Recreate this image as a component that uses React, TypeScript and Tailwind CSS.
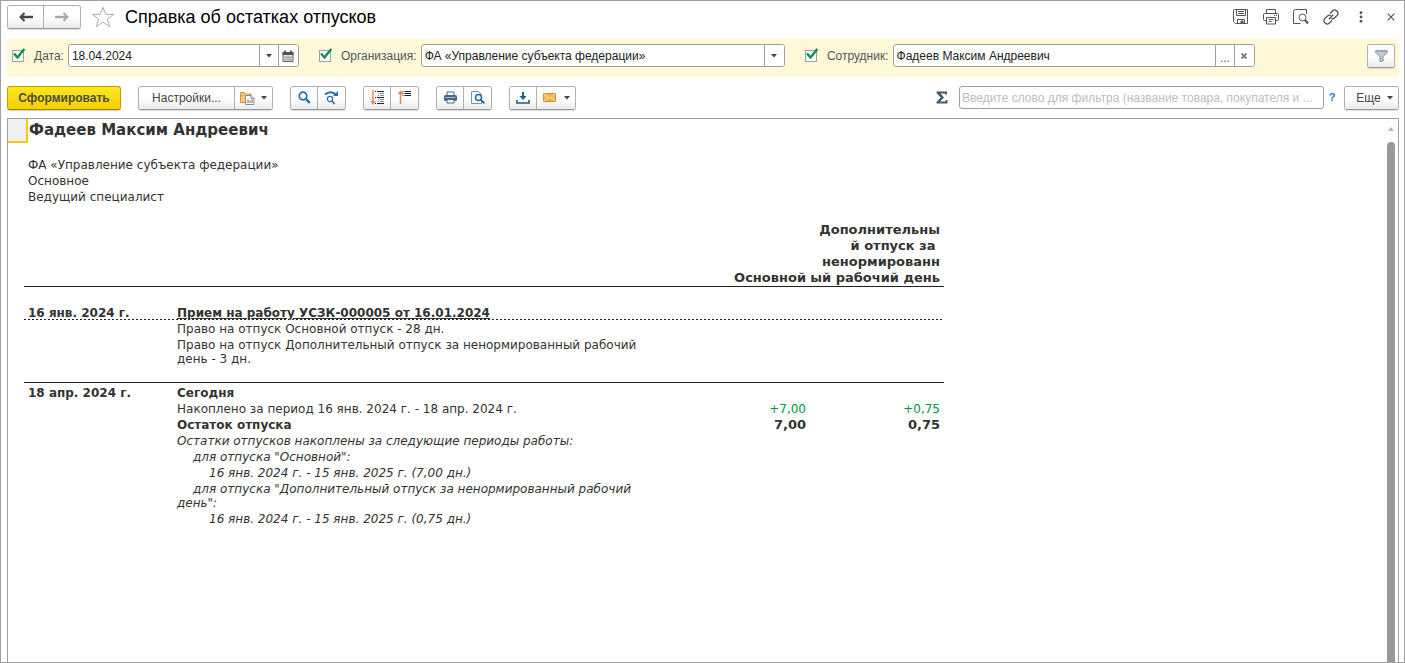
import type { ReactNode } from "react";

const buttonFace = "bg-linear-to-b from-white from-50% to-[#ebebeb] text-[#444]";
const groupFrame =
  "flex h-6 shrink-0 overflow-hidden rounded-[3px] border border-[#b0b0b0] border-b-[#9a9a9a] shadow-[0_1px_1px_rgba(0,0,0,0.15)] divide-x divide-[#b0b0b0]";

function Caret() {
  return (
    <svg width="6" height="4" viewBox="0 0 6 4" aria-hidden="true">
      <path d="M0 0h6L3 3.5z" fill="#444" />
    </svg>
  );
}

function ToolButton({ label, className = "w-[27px]", children }: { label: string; className?: string; children: ReactNode }) {
  return (
    <button type="button" aria-label={label} className={`flex items-center justify-center ${buttonFace} ${className}`}>
      {children}
    </button>
  );
}

function Tick({ id, label }: { id: string; label: string }) {
  return (
    <span className="flex shrink-0 items-center gap-2.5">
      <span className="relative flex">
        <input
          id={id}
          type="checkbox"
          defaultChecked
          className="peer size-3 appearance-none border border-[#a0a0a0] bg-white"
        />
        <svg
          className="pointer-events-none absolute -top-1 left-0 hidden peer-checked:block"
          width="14"
          height="14"
          viewBox="0 0 14 14"
          aria-hidden="true"
        >
          <path d="M2 7.5l3.500 4L12.300 3" fill="none" stroke="#009646" strokeWidth="2.4" />
        </svg>
      </span>
      <label htmlFor={id} className="text-[#555]">
        {label}
      </label>
    </span>
  );
}

function Field({ label, value, className, children }: { label: string; value: string; className: string; children: ReactNode }) {
  return (
    <div className={`flex h-[23px] overflow-hidden rounded-[3px] border border-[#a0a0a0] bg-white divide-x divide-[#a0a0a0] ${className}`}>
      <input aria-label={label} defaultValue={value} className="min-w-0 flex-1 px-[3px] text-[#222] outline-none" />
      {children}
    </div>
  );
}

function FieldButton({ label, children }: { label: string; children: ReactNode }) {
  return (
    <button type="button" aria-label={label} className="flex w-[19px] shrink-0 items-center justify-center bg-white text-[#555]">
      {children}
    </button>
  );
}

function TitleBar() {
  return (
    <header className="flex h-8 items-center">
      <div className={groupFrame}>
        <ToolButton label="Назад" className="w-9">
          <svg width="14" height="10" viewBox="0 0 14 10" fill="none" stroke="#444" aria-hidden="true">
            <path d="M2 5h12" strokeWidth="2.4" />
            <path d="M5.500 1L1.500 5l4 4" strokeWidth="2" />
          </svg>
        </ToolButton>
        <ToolButton label="Вперед" className="w-9">
          <svg width="14" height="10" viewBox="0 0 14 10" fill="none" stroke="#a8a8a8" aria-hidden="true">
            <path d="M0 5h12" strokeWidth="2.4" />
            <path d="M8.500 1l4 4-4 4" strokeWidth="2" />
          </svg>
        </ToolButton>
      </div>
      <button type="button" aria-label="Добавить в избранное" className="ml-2.5">
        <svg width="24" height="22" viewBox="0 0 24 22" aria-hidden="true">
          <path
            d="M12 1.2l2.7 7.1 8 .1-6.3 4.7 2.3 7.6L12 16.2l-6.7 4.5 2.3-7.6L1.3 8.4l8-.1z"
            fill="#fff"
            stroke="#aab0b8"
          />
        </svg>
      </button>
      <h1 className="ml-2.5 flex-1 text-[18px] text-black">Справка об остатках отпусков</h1>
      <div className="flex items-center gap-[14px] text-[#555]">
        <button type="button" aria-label="Сохранить">
          <svg width="16" height="16" viewBox="0 0 16 16" fill="none" stroke="currentColor" aria-hidden="true">
            <path d="M.5 1.5q0-1 1-1h13v14h-12l-2-2z" />
            <path d="M3.5.5v6h9v-6M5 2.500h6M5 4.500h6" />
            <path d="M4.500 14v-3.500h7V14" />
            <path d="M8 12h2v2H8z" fill="currentColor" />
          </svg>
        </button>
        <button type="button" aria-label="Печать">
          <svg width="16" height="16" viewBox="0 0 16 16" fill="none" stroke="currentColor" aria-hidden="true">
            <path d="M3.500 4V.5h9V4M3.500 11.500h-2q-1 0-1-1v-5q0-1 1-1h13q1 0 1 1v5q0 1-1 1h-2" />
            <path d="M3.500 8.500h9v6.500h-9zM5.500 10.500h5M5.500 12.500h3M11 6.500h1M13 6.500h1" />
          </svg>
        </button>
        <button type="button" aria-label="Предварительный просмотр">
          <svg width="16" height="16" viewBox="0 0 16 16" fill="none" stroke="currentColor" aria-hidden="true">
            <path d="M13.500 5V.5h-11q-2 0-2 2v12h7" />
            <circle cx="9.500" cy="8.500" r="3.500" />
            <path d="M12 11l3 3.500" strokeWidth="2" />
          </svg>
        </button>
        <button type="button" aria-label="Получить ссылку">
          <svg width="16" height="16" viewBox="0 0 16 16" fill="none" stroke="currentColor" strokeWidth="1.300" aria-hidden="true">
            <path d="M7 4.500l2.800-2.800a2.600 2.600 0 0 1 3.700 0l.8.8a2.600 2.600 0 0 1 0 3.700l-2.800 2.800a2.600 2.600 0 0 1-3.200.4" />
            <path d="M9 11.500l-2.800 2.800a2.600 2.600 0 0 1-3.700 0l-.8-.8a2.600 2.600 0 0 1 0-3.700l2.800-2.800a2.600 2.600 0 0 1 3.200-.4" />
            <path d="M5.800 10.200l4.400-4.400" />
          </svg>
        </button>
        <button type="button" aria-label="Дополнительно" className="flex w-4 justify-center">
          <svg width="4" height="12" viewBox="0 0 4 12" fill="currentColor" aria-hidden="true">
            <circle cx="2" cy="1.700" r="1.400" />
            <circle cx="2" cy="6" r="1.400" />
            <circle cx="2" cy="10.300" r="1.400" />
          </svg>
        </button>
        <button type="button" aria-label="Закрыть" className="flex w-4 justify-center">
          <svg width="8" height="8" viewBox="0 0 8 8" stroke="currentColor" strokeWidth="1.200" aria-hidden="true">
            <path d="M.7.7l6.600 6.600M7.300.7L.7 7.300" />
          </svg>
        </button>
      </div>
    </header>
  );
}

function FilterBar() {
  return (
    <div className="mt-1.5 flex h-[38px] items-start bg-[#fff9d9] pt-[5px] pr-1 pl-[5px]">
      <div className="flex h-[23px] items-center gap-1">
        <Tick id="use-date" label="Дата:" />
        <Field label="Дата" value="18.04.2024" className="w-[231px]">
          <FieldButton label="Выбрать дату">
            <Caret />
          </FieldButton>
          <FieldButton label="Календарь">
            <svg width="12" height="12" viewBox="0 0 12 12" aria-hidden="true">
              <path d="M1 2.500h10v9H1z" fill="#e4e4e4" stroke="#666" />
              <path d="M.5 2h11v3H.5zM2 .5h2V3H2zM8 .5h2V3H8z" fill="#555" />
              <path d="M3 6v5M5 6v5M7 6v5M9 6v5M1 7.500h10M1 9.500h10" stroke="#aaa" />
            </svg>
          </FieldButton>
        </Field>
      </div>
      <div className="ml-5 flex h-[23px] w-[466px] min-w-0 items-center gap-1">
        <Tick id="use-org" label="Организация:" />
        <Field label="Организация" value="ФА «Управление субъекта федерации»" className="min-w-0 flex-1">
          <FieldButton label="Выбрать организацию">
            <Caret />
          </FieldButton>
        </Field>
      </div>
      <div className="ml-5 flex h-[23px] w-[450px] min-w-0 items-center gap-1">
        <Tick id="use-employee" label="Сотрудник:" />
        <Field label="Сотрудник" value="Фадеев Максим Андреевич" className="min-w-0 flex-1">
          <FieldButton label="Выбрать сотрудника">
            <span className="pt-1">...</span>
          </FieldButton>
          <FieldButton label="Очистить">
            <svg width="6" height="6" viewBox="0 0 6 6" stroke="#777" strokeWidth="1.800" aria-hidden="true">
              <path d="M.5.5l5 5M5.500.5l-5 5" />
            </svg>
          </FieldButton>
        </Field>
      </div>
      <div className={`${groupFrame} ml-auto`}>
        <ToolButton label="Отбор" className="w-[26px]">
          <svg width="13" height="12" viewBox="0 0 13 12" aria-hidden="true">
            <path d="M.7.7h11.600v1.600L8 6.700v4.300l-3 .5V6.700L.7 2.300z" fill="#c3ccd6" stroke="#8290a0" />
            <path d="M1 1.300h11" stroke="#93a0ae" />
          </svg>
        </ToolButton>
      </div>
    </div>
  );
}

function CommandBar() {
  return (
    <div className="flex h-[41px] items-center gap-[17px]">
      <button
        type="button"
        className="h-6 w-[114px] shrink-0 rounded-[3px] border border-[#c0a000] border-b-[#a08600] bg-linear-to-b from-[#ffe620] to-[#f5cf00] font-bold text-[#4d4d33] shadow-[0_1px_1px_rgba(0,0,0,0.2)]"
      >
        Сформировать
      </button>
      <div className={groupFrame}>
        <button type="button" className={`w-24 ${buttonFace}`}>
          Настройки...
        </button>
        <ToolButton label="Варианты отчета" className="w-[37px] gap-1.5">
          <svg width="15" height="14" viewBox="0 0 15 14" aria-hidden="true">
            <path d="M.5 11.500V1.500h4l1 1.500h5.500v8.500z" fill="#f7cb72" stroke="#c99a40" />
            <path d="M1 4.500h10" stroke="#e0ae50" />
            <path d="M5.500 4.500h5.500l3 3v6H5.500z" fill="#fff" stroke="#7f93a8" />
            <path d="M11 4.500v3h3" fill="none" stroke="#7f93a8" />
            <path d="M8 8.500V12" stroke="#d33" />
            <path d="M10 9.500V12" stroke="#2f9a4a" />
            <path d="M12 8.500V12" stroke="#d33" />
          </svg>
          <Caret />
        </ToolButton>
      </div>
      <div className={groupFrame}>
        <ToolButton label="Найти">
          <svg width="13" height="13" viewBox="0 0 13 13" fill="none" stroke="#2470a8" aria-hidden="true">
            <circle cx="5" cy="5" r="3.800" strokeWidth="1.700" />
            <path d="M7.800 7.800l4 4" strokeWidth="2.400" />
          </svg>
        </ToolButton>
        <ToolButton label="Найти далее">
          <svg width="15" height="14" viewBox="0 0 15 14" fill="none" stroke="#2470a8" aria-hidden="true">
            <path d="M1 3.500Q6-1 12 3.500" strokeWidth="2" />
            <path d="M14 0v5H9z" fill="#2470a8" stroke="none" />
            <circle cx="6" cy="8" r="2.600" strokeWidth="1.200" />
            <path d="M8 10l2.500 3" strokeWidth="1.800" />
          </svg>
        </ToolButton>
      </div>
      <div className={groupFrame}>
        <ToolButton label="Развернуть группы">
          <svg width="13" height="15" viewBox="0 0 13 15" fill="none" aria-hidden="true">
            <path d="M2 0v13M0 11l2 2.500L4 11" stroke="#ee8555" strokeWidth="1.500" />
            <path d="M4 1.500h1M6 1.500h7M4 7.500h1M6 7.500h7M4 13.500h1M6 13.500h7" stroke="#222" />
            <path d="M7 3.500h1M9 3.500h4M7 5.500h1M9 5.500h4M7 9.500h1M9 9.500h4M7 11.500h1M9 11.500h4" stroke="#888" />
          </svg>
        </ToolButton>
        <ToolButton label="Свернуть группы">
          <svg width="13" height="15" viewBox="0 0 13 15" fill="none" aria-hidden="true">
            <path d="M2.500 14V1.500M.5 4l2-2.500L4.500 4" stroke="#ee8555" strokeWidth="1.500" />
            <path d="M4.500 1.500h1M6.500 1.500H13M4.500 3.500h1M6.500 3.500H13M4.500 5.500h1M6.500 5.500H13" stroke="#222" />
          </svg>
        </ToolButton>
      </div>
      <div className={groupFrame}>
        <ToolButton label="Печать отчета">
          <svg width="13" height="13" viewBox="0 0 13 13" aria-hidden="true">
            <path d="M3 1h7v4H3z" fill="#fff" stroke="#47698f" />
            <rect x="0" y="4" width="13" height="6" rx="1.500" fill="#47698f" />
            <path d="M1.500 6.500h10" stroke="#a9bcd0" />
            <path d="M3 8.500h7v3.500H3z" fill="#fff" stroke="#47698f" />
          </svg>
        </ToolButton>
        <ToolButton label="Просмотр печати">
          <svg width="14" height="13" viewBox="0 0 14 13" fill="none" aria-hidden="true">
            <path d="M.5.5h7l3 3v9H.5z" fill="#fff" stroke="#7f93a8" />
            <circle cx="7.500" cy="6.500" r="3" fill="#fff" stroke="#1c6ea8" strokeWidth="1.600" />
            <path d="M9.700 8.700l3.600 3.600" stroke="#1c6ea8" strokeWidth="2" />
          </svg>
        </ToolButton>
      </div>
      <div className={groupFrame}>
        <ToolButton label="Сохранить отчет">
          <svg width="14" height="12" viewBox="0 0 14 12" fill="none" stroke="#1b5c8a" aria-hidden="true">
            <path d="M7 0v5" strokeWidth="2" />
            <path d="M3.500 4h7L7 8z" fill="#1b5c8a" stroke="none" />
            <path d="M1 8v3h12V8" strokeWidth="1.600" />
          </svg>
        </ToolButton>
        <ToolButton label="Отправить" className="w-[38px] gap-2">
          <svg width="13" height="9" viewBox="0 0 13 9" fill="none" aria-hidden="true">
            <path d="M.5.5h12v8H.5z" fill="#f3b548" stroke="#d4922c" />
            <path d="M1 1l5.500 4.500L12 1M1 8l4-3.500M12 8L8 4.500" stroke="#fbe6bd" />
          </svg>
          <Caret />
        </ToolButton>
      </div>
      <div className="ml-auto flex items-center">
        <button type="button" aria-label="Сумма" className="mr-[11px]">
          <svg width="12" height="13" viewBox="0 0 12 13" aria-hidden="true">
            <path d="M.5.5h10.500v3H9.500L9 2.500H4.500L8 6.500l-4 4h5.300l.7-1.500h1.500V12.500H.5v-1.500L4.800 6.500.5 2z" fill="#44586a" />
          </svg>
        </button>
        <input
          aria-label="Фильтр"
          placeholder="Введите слово для фильтра (название товара, покупателя и ..."
          className="h-[23px] w-[365px] rounded-[3px] border border-[#a0a0a0] bg-white px-0.5 text-[#222] outline-none placeholder:text-[#bdbdbd]"
        />
        <button type="button" className="w-5 pr-1 text-[11px] font-bold text-[#1c7cc4]">
          ?
        </button>
        <div className={groupFrame}>
          <button type="button" className={`flex w-[53px] items-center justify-center gap-1.5 pl-1.5 ${buttonFace}`}>
            Еще
            <Caret />
          </button>
        </div>
      </div>
    </div>
  );
}

const cell = "px-1 pt-0.5 align-top";
const num = "px-1 pt-0.5 text-right align-top";
const dottedRule =
  "bg-[repeating-linear-gradient(90deg,#222_0_2px,transparent_2px_4px)] bg-[length:100%_1px] bg-bottom bg-no-repeat";

function Report() {
  return (
    <div className="font-['DejaVu_Sans',sans-serif] text-[12px] leading-[14px] text-[#333]">
      <div className="flex">
        <span className="h-6 w-5 shrink-0 border-r-2 border-b-2 border-[#f5c518] bg-[#f0f0f0]" />
        <h2 className="pl-px text-[15px] leading-[22px] font-bold">Фадеев Максим Андреевич</h2>
      </div>
      <div className="mt-3.5 pl-5 leading-4">
        <p>ФА «Управление субъекта федерации»</p>
        <p>Основное</p>
        <p>Ведущий специалист</p>
      </div>
      <table className="mt-[17px] ml-4 w-[920px] table-fixed border-collapse">
        <colgroup>
          <col className="w-[149px]" />
          <col className="w-[485px]" />
          <col className="w-[152px]" />
          <col className="w-[134px]" />
        </colgroup>
        <thead>
          <tr className="border-b border-[#222] align-bottom text-[13px] leading-4">
            <th />
            <th />
            <th className="pr-1 text-right">Основной</th>
            <th className="pr-1 text-right whitespace-nowrap">
              Дополнительны
              <br />й отпуск за&nbsp;
              <br />
              ненормированн
              <br />
              ый рабочий день
            </th>
          </tr>
        </thead>
        <tbody>
          <tr className={`align-bottom leading-3 font-bold ${dottedRule}`}>
            <td className="px-1 pt-5 pb-px">16 янв. 2024 г.</td>
            <td className="px-1 pt-5 pb-px">
              <a href="#document" className="underline">
                Прием на работу УСЗК-000005 от 16.01.2024
              </a>
            </td>
            <td />
            <td />
          </tr>
          <tr>
            <td />
            <td className={cell}>Право на отпуск Основной отпуск - 28 дн.</td>
            <td />
            <td />
          </tr>
          <tr className="border-b border-[#222]">
            <td />
            <td className="px-1 pt-0.5 pb-4">Право на отпуск Дополнительный отпуск за ненормированный рабочий день - 3 дн.</td>
            <td />
            <td />
          </tr>
          <tr className="font-bold">
            <td className="px-1 pt-[3px]">18 апр. 2024 г.</td>
            <td className="px-1 pt-[3px]">Сегодня</td>
            <td />
            <td />
          </tr>
          <tr>
            <td />
            <td className={cell}>Накоплено за период 16 янв. 2024 г. - 18 апр. 2024 г.</td>
            <td className={`${num} text-[#009646]`}>+7,00</td>
            <td className={`${num} text-[#009646]`}>+0,75</td>
          </tr>
          <tr className="font-bold">
            <td />
            <td className={cell}>Остаток отпуска</td>
            <td className={`${num} text-[13px]`}>7,00</td>
            <td className={`${num} text-[13px]`}>0,75</td>
          </tr>
          <tr className="italic">
            <td />
            <td className={cell}>Остатки отпусков накоплены за следующие периоды работы:</td>
          </tr>
          <tr className="italic">
            <td />
            <td className={`${cell} indent-4`}>для отпуска "Основной":</td>
          </tr>
          <tr className="italic">
            <td />
            <td className={`${cell} indent-8`}>16 янв. 2024 г. - 15 янв. 2025 г. (7,00 дн.)</td>
          </tr>
          <tr className="italic">
            <td />
            <td className={`${cell} indent-4`}>для отпуска "Дополнительный отпуск за ненормированный рабочий день":</td>
          </tr>
          <tr className="italic">
            <td />
            <td className={`${cell} indent-8`}>16 янв. 2024 г. - 15 янв. 2025 г. (0,75 дн.)</td>
          </tr>
        </tbody>
      </table>
    </div>
  );
}

export default function App() {
  return (
    <div className="flex min-h-screen flex-col border border-[#a0a0a0] bg-white pr-[5px] pl-1.5 font-['Liberation_Sans',Arial,sans-serif] text-[12px]">
      <TitleBar />
      <FilterBar />
      <CommandBar />
      <main className="flex flex-1 border border-b-0 border-[#a0a0a0]">
        <div className="min-w-0 flex-1">
          <Report />
        </div>
        <div className="flex w-3 shrink-0 flex-col items-center pt-2 pr-0.5" aria-hidden="true">
          <svg width="6" height="4" viewBox="0 0 6 4">
            <path d="M0 4h6L3 0z" fill="#b5b5b5" />
          </svg>
          <span className="mt-[11px] w-2 flex-1 rounded-t-full bg-[#999]" />
        </div>
      </main>
    </div>
  );
}
